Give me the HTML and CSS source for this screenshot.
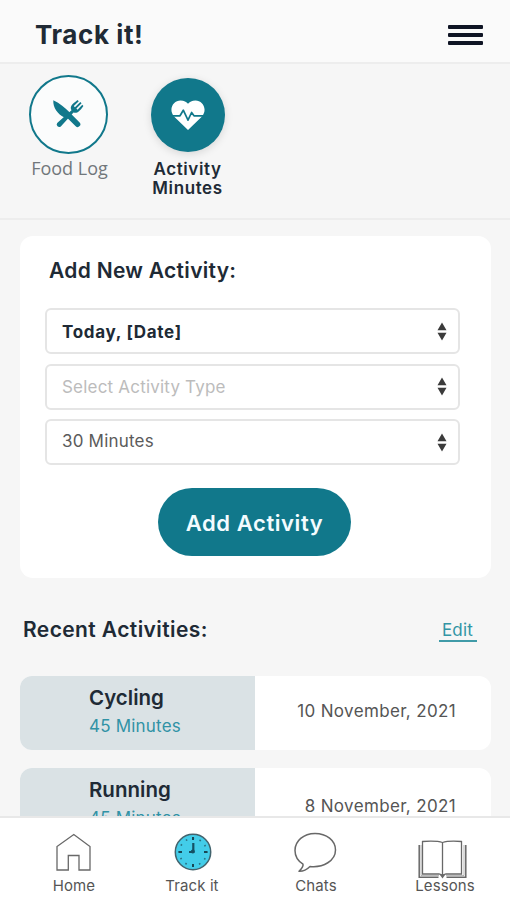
FILE: index.html
```html
<!DOCTYPE html>
<html lang="en">
<head>
<meta charset="utf-8">
<title>Track it!</title>
<link rel="stylesheet" href="styles.css">
</head>
<body>
<div class="app">
  <header class="topbar">
    <h1 class="title">Track it!</h1>
    <div class="menu"><span></span><span></span><span></span></div>
  </header>
  <nav class="tabs">
    <div class="tab">
      <div class="circle outline">
        <svg width="32" height="30" viewBox="0 0 32 30" fill="#11788b" stroke="none">
          <path d="M1.3 1.2C8 4.500 13 8.500 17 12.800L27.400 23.200A2.500 2.500 0 0 1 23.700 27.300L13.800 17.500L12 18.300C6 15 .8 9 1.300 1.200Z"/>
          <path d="M5.200 24L19.500 11.300C17.500 7.500 19.500 5.800 25.500 1L26.800 2.200L21.800 7.100L22.900 8.200L28.300 3L29.600 4.200L24.400 9.600L25.500 10.700L30.300 5.700L31.400 7C27 13.500 24.500 14.500 21.500 13.400L8.800 27.400A2.500 2.500 0 0 1 5.200 24Z"/>
        </svg>
      </div>
      <span class="tab-label light">Food Log</span>
    </div>
    <div class="tab">
      <div class="circle solid">
        <svg width="34" height="31" viewBox="0 0 34 31">
          <path d="M17 30L3 16.500C-3 9 2.500 .5 9.500 .5C13 .5 15.500 2 17 3.800C18.500 2 21 .5 24.500 .5C31.500 .5 37 9 31 16.500Z" fill="#fff"/>
          <path d="M1.500 15.800H9L12.300 10.200L17 20.200L20.600 12.500L23 15.800H32.500" fill="none" stroke="#11788b" stroke-width="1.700" stroke-linejoin="round"/>
        </svg>
      </div>
      <span class="tab-label">Activity<br>Minutes</span>
    </div>
  </nav>
  <main class="content">
    <section class="card">
      <h2 class="heading">Add New Activity:</h2>
      <div class="field strong"><span>Today, [Date]</span><svg class="sort" width="10" height="19" viewBox="0 0 10 19"><path d="M5 .5L9.500 8.200H.5ZM.5 10.800H9.500L5 18.500Z"/></svg></div>
      <div class="field muted"><span>Select Activity Type</span><svg class="sort" width="10" height="19" viewBox="0 0 10 19"><path d="M5 .5L9.500 8.200H.5ZM.5 10.800H9.500L5 18.500Z"/></svg></div>
      <div class="field minutes"><span>30 Minutes</span><svg class="sort" width="10" height="19" viewBox="0 0 10 19"><path d="M5 .5L9.500 8.200H.5ZM.5 10.800H9.500L5 18.500Z"/></svg></div>
      <button class="add">Add Activity</button>
    </section>
    <div class="recent-head">
      <h2 class="recent">Recent Activities:</h2>
      <a class="edit">Edit</a>
    </div>
    <article class="row">
      <div class="what"><strong class="name">Cycling</strong><span class="mins">45 Minutes</span></div>
      <time class="when">10 November, 2021</time>
    </article>
    <article class="row second">
      <div class="what"><strong class="name">Running</strong><span class="mins">45 Minutes</span></div>
      <time class="when">8 November, 2021</time>
    </article>
  </main>
  <footer class="bottom">
    <div class="item home">
      <svg width="46" height="42" viewBox="0 0 46 42" fill="none" stroke="#686868" stroke-width="1.300"><path d="M6 39V15.500L22.800 3.500L39 15.500V39H28V24.500H17.300V39Z"/></svg>
      <span>Home</span>
    </div>
    <div class="item track">
      <svg width="46" height="42" viewBox="-1 0 46 42"><circle cx="23" cy="21" r="17.700" fill="#43cde9" stroke="#42636d" stroke-width="1.500"/><circle cx="23" cy="21" r="13.600" fill="none" stroke="#2a6f80" stroke-width="1.600" stroke-dasharray="1.600 5.521" stroke-dashoffset=".8"/><path d="M23 6V9M23 33V36M8.500 21H12M34 21H37.500" stroke="#194754" stroke-width="2"/><path d="M23.300 12V21H19" fill="none" stroke="#155164" stroke-width="2.200"/><circle cx="22.800" cy="20.500" r="2" fill="#155164"/></svg>
      <span>Track it</span>
    </div>
    <div class="item chats">
      <svg width="46" height="42" viewBox="0 0 46 42" fill="none" stroke="#686868" stroke-width="1.500" stroke-linejoin="round"><path d="M22 2.500C10.500 2.500 2 10 2 19.500C2 25 5 30 10 33.200C10.500 35.500 8.500 38 6 40.300C10.500 40.500 14.500 38 17 35.500C30.500 37 42.500 29.500 42.500 19C42.500 9.500 33.500 2.500 22 2.500Z"/></svg>
      <span>Chats</span>
    </div>
    <div class="item lessons">
      <svg class="book" width="50" height="42" viewBox="0 0 50 42" fill="none" stroke="#686868" stroke-width="1.300"><path d="M4.500 10.500C12 10 20 10 24.500 11.500C29 10 37 10 43.500 10.500V43H28L24.500 44L21 43H4.500ZM24.500 11.500V43.500"/><path d="M1.200 14V46.200H20.500M28.500 46.200H47.800V14" stroke-width="1.500"/><path d="M3 14V44.600H21M28 44.600H46V14" stroke-width=".5"/><path d="M22 44L24.500 47.500L27 44Z" fill="#686868" stroke="none"/></svg>
      <span>Lessons</span>
    </div>
  </footer>
</div>
</body>
</html>
```
FILE: styles.css
```css
* { box-sizing: border-box; }
body { margin: 0; font-family: Inter, sans-serif; color: #202a35; background: #f6f6f6; }
h1, h2 { margin: 0; }
.app { height: 900px; display: flex; flex-direction: column; overflow: hidden; }
.topbar { flex: none; height: 64px; display: flex; align-items: center; justify-content: space-between; padding: 7px 27px 0 35px; background: #fafafa; border-bottom: 2px solid #ededed; }
.title { font-size: 26px; line-height: 32px; font-weight: 650; letter-spacing: .6px; }
.menu { display: grid; gap: 4px; }
.menu span { width: 35px; height: 4px; background: #0f1424; border-radius: 1px; }
.tabs { flex: none; height: 156px; display: flex; gap: 22px; padding: 11px 20px 0; border-bottom: 2px solid #ededed; }
.tab { width: 97px; display: flex; flex-direction: column; align-items: center; }
.circle { flex: none; width: 79px; height: 79px; border-radius: 50%; display: flex; align-items: center; justify-content: center; }
.outline { border: 2px solid #11788b; background: #fbfcfc; padding: 0 2px 2px 0; }
.solid { width: 74px; height: 74px; margin: 3px 0 2px; background: #11788b; box-shadow: 0 2px 9px rgba(0,0,0,.13); }
.tab-label { margin-top: 6px; font-size: 17px; line-height: 19px; font-weight: 600; letter-spacing: .6px; text-align: center; white-space: nowrap; }
.light { margin-top: 5px; font-family: "Open Sans", sans-serif; font-size: 18px; font-weight: 400; color: #71777b; letter-spacing: 0; padding-left: 2px; }
.content { flex: 1; min-height: 0; padding: 16px 19px 0 20px; overflow: hidden; }
.card { height: 342px; display: flex; flex-direction: column; padding: 21px 31px 0 25px; background: #fff; border-radius: 13px; }
.heading { padding-left: 4px; margin-bottom: 23px; font-size: 21px; line-height: 28px; font-weight: 600; letter-spacing: .3px; }
.field { flex: none; height: 46px; margin-bottom: 9.500px; padding: 0 11px 0 15px; display: flex; align-items: center; justify-content: space-between; border: 2px solid #e5e5e5; border-radius: 6px; font-size: 17px; letter-spacing: .2px; }
.field span { padding-top: 1px; }
.strong { font-weight: 650; letter-spacing: .7px; }
.muted { color: #bcbcbc; }
.minutes { color: #5b5b5b; }
.minutes span { padding: 0 0 2px; }
.sort { fill: #3b3b3b; }
.add { align-self: center; width: 193px; height: 68px; margin: 13px 0 0 4px; padding: 2px 0 0; border: 0; border-radius: 34px; background: #11788b; color: #f3fcff; font: 600 22px Inter, sans-serif; letter-spacing: .6px; }
.recent-head { display: flex; justify-content: space-between; align-items: center; height: 98px; padding: 5px 14px 0 3px; }
.recent { font-size: 21px; line-height: 28px; font-weight: 600; letter-spacing: .4px; }
.edit { padding: 0 4px 0 3px; border-bottom: 2px solid #409ba8; color: #3295a5; font-size: 17px; line-height: 19px; letter-spacing: .2px; margin-top: 3px; }
.row { height: 74px; display: flex; border-radius: 12px; overflow: hidden; background: #fff; margin-bottom: 18px; }
.what { width: 235px; padding: 8px 0 0 69px; background: #dae2e5; }
.name { display: block; font-size: 20.500px; line-height: 28px; font-weight: 600; letter-spacing: 0; }
.mins { display: block; font-size: 17px; line-height: 29px; letter-spacing: .2px; color: #3092a5; }
.when { flex: 1; padding: 25px 35px 0 0; text-align: right; font-size: 17px; line-height: 21px; letter-spacing: .35px; color: #555; white-space: nowrap; }
.second .when { padding-top: 28px; }
.bottom { flex: none; height: 84px; display: flex; background: #fff; border-top: 2px solid #e8e8e8; padding: 13px 1px 0 15px; }
.item { display: flex; flex-direction: column; align-items: center; font-size: 15px; line-height: 20px; letter-spacing: .1px; color: #555; }
.item svg { overflow: visible; }
.item span { margin-top: 3px; }
.home, .track { width: 118px; }
.chats { width: 130px; }
.lessons { width: 128px; }
.book { margin-right: 4px; }
```
